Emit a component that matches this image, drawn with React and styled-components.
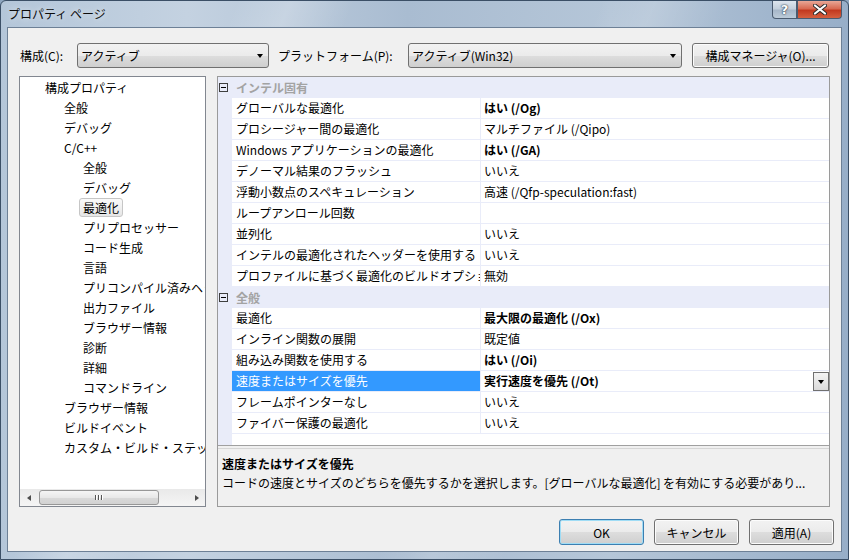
import React from 'react';
import styled, { createGlobalStyle } from 'styled-components';

const GlobalStyle = createGlobalStyle`
  html, body { margin: 0; padding: 0; }
  body {
    font-family: "Noto Sans CJK JP", "Noto Sans", sans-serif;
    font-size: 12px;
    color: #000;
    background: #8ea6c0;
  }
  * { box-sizing: border-box; }
`;

const Window = styled.div`
  width: 849px;
  height: 560px;
  display: flex;
  flex-direction: column;
  border: 1px solid #3b4f66;
  border-radius: 6px 6px 0 0;
  overflow: hidden;
  background:
    linear-gradient(112deg, transparent 0 22%, rgba(255,255,255,0.22) 27%, transparent 33%, transparent 56%, rgba(255,255,255,0.16) 61%, transparent 68%),
    linear-gradient(to right, #b4c6d9, #c4d2e1 22%, #a9bcd1 48%, #b5c6d8 72%, #97aec8);
`;

const TitleBar = styled.div`
  height: 26px;
  flex: none;
  display: flex;
  justify-content: space-between;
  align-items: flex-start;
  padding: 0 6px 0 7px;
`;

const Title = styled.div`
  margin-top: 4px;
  line-height: 17px;
  font-size: 12px;
  color: #0b0b0b;
  text-shadow: 0 0 6px rgba(255,255,255,0.8);
`;

const CaptionButtons = styled.div`
  display: flex;
`;

const CaptionButton = styled.div`
  width: ${p => p.$w}px;
  height: 18px;
  display: flex;
  align-items: center;
  justify-content: center;
  border: 1px solid #4a5b70;
  border-top: none;
  border-radius: ${p => p.$r};
  background: ${p => p.$close
    ? 'linear-gradient(#e9a796, #d86a52 45%, #c2391f 55%, #d5603f)'
    : 'linear-gradient(#dde5ee, #c4d0dd 45%, #a7b7c9 55%, #bccbd9)'};
  color: #fff;
  font-weight: 700;
  font-size: 13px;
  text-shadow: 0 0 2px #203040, 0 0 1px #203040;
  font-family: "DejaVu Sans", sans-serif;
`;

const Body = styled.div`
  flex: 1;
  margin: 0 6px 7px 6px;
  background: #f0f0f0;
  border: 1px solid #6d8096;
  display: flex;
  flex-direction: column;
`;

const Toolbar = styled.div`
  display: flex;
  align-items: center;
  padding: 15px 0 0 12px;
  height: 40px;
`;

const Label = styled.span`
  width: ${p => p.$w}px;
  line-height: 25px;
  white-space: nowrap;
`;

const Combo = styled.div`
  width: ${p => p.$w}px;
  height: 25px;
  margin-right: ${p => p.$mr || 0}px;
  display: flex;
  align-items: center;
  justify-content: space-between;
  padding: 0 5px 0 3px;
  border: 1px solid #707070;
  border-radius: 3px;
  background: linear-gradient(#f2f2f2, #ebebeb 50%, #dddddd 51%, #cfcfcf);
`;

const Arrow = styled.span`
  width: 0;
  height: 0;
  border-left: 3.5px solid transparent;
  border-right: 3.5px solid transparent;
  border-top: 4px solid #000;
`;

const PushButton = styled.div`
  width: ${p => p.$w}px;
  height: ${p => p.$h || 25}px;
  display: flex;
  align-items: center;
  justify-content: center;
  border: 1px solid ${p => p.$default ? '#3c7fb1' : '#707070'};
  border-radius: 3px;
  background: linear-gradient(#f2f2f2, #ebebeb 50%, #dddddd 51%, #cfcfcf);
  box-shadow: ${p => p.$default ? 'inset 0 0 0 1px #9fdcf5' : 'inset 0 0 0 1px #fcfcfc'};
  white-space: nowrap;
`;

const Main = styled.div`
  display: flex;
  gap: 11px;
  padding-left: 11px;
  margin-top: 8px;
  height: 431px;
`;

const TreePanel = styled.div`
  width: 187px;
  border: 1px solid #828790;
  background: #fff;
  display: flex;
  flex-direction: column;
`;

const TreeList = styled.div`
  flex: 1;
  overflow: hidden;
`;

const TreeItem = styled.div`
  height: 20px;
  display: flex;
  align-items: center;
  padding-left: ${p => 21 + p.$level * 19}px;
  white-space: nowrap;
`;

const TreeLabel = styled.span`
  line-height: 17px;
  padding: 0 3px;
  border: 1px solid ${p => p.$selected ? '#c6c6c6' : 'transparent'};
  border-radius: 3px;
  background: ${p => p.$selected ? 'linear-gradient(#fafafa, #e6e6e6)' : 'transparent'};
`;

const HScroll = styled.div`
  height: 17px;
  display: flex;
  align-items: center;
  background: linear-gradient(#e9e9e9, #f5f5f5);
`;

const ScrollArrow = styled.div`
  width: 17px;
  height: 17px;
  display: flex;
  align-items: center;
  justify-content: center;
  &::before {
    content: '';
    border-top: 3.5px solid transparent;
    border-bottom: 3.5px solid transparent;
    ${p => p.$dir === 'left' ? 'border-right: 4px solid #4d4d4d;' : 'border-left: 4px solid #4d4d4d;'}
  }
`;

const Thumb = styled.div`
  width: 120px;
  height: 15px;
  margin-left: 2px;
  margin-right: auto;
  border: 1px solid #979797;
  border-radius: 3px;
  background: linear-gradient(#f5f5f5, #e8e8e8 50%, #d9d9d9 51%, #d2d2d2);
  display: flex;
  align-items: center;
  justify-content: center;
  gap: 1px;
`;

const Grip = styled.span`
  width: 1px;
  height: 5px;
  background: #555;
  box-shadow: 1px 0 0 #fff;
  margin-right: 1px;
`;

const GridPanel = styled.div`
  width: 613px;
  border: 1px solid #9a9a9a;
  display: flex;
  flex-direction: column;
`;

const GridList = styled.div`
  flex: 1;
  overflow: hidden;
  background: linear-gradient(to right, #e9ecf9 14px, #fff 14px);
`;

const CategoryRow = styled.div`
  height: 21px;
  display: grid;
  grid-template-columns: 14px 1fr;
  align-items: center;
  background: #e9ecf9;
`;

const Collapse = styled.span`
  width: 9px;
  height: 9px;
  margin-left: 1px;
  border: 1px solid #3f3f3f;
  display: flex;
  align-items: center;
  justify-content: center;
  &::before {
    content: '';
    width: 5px;
    height: 1px;
    background: #000;
  }
`;

const CategoryText = styled.span`
  padding-left: 4px;
  color: #a3a3a3;
  font-weight: 700;
`;

const Row = styled.div`
  height: 21px;
  display: grid;
  grid-template-columns: 14px 249px 1fr;
`;

const NameCell = styled.div`
  border-bottom: 1px solid #e9ecf9;
  border-right: 1px solid #e9ecf9;
  padding-left: 4px;
  line-height: 20px;
  white-space: nowrap;
  overflow: hidden;
  background: ${p => p.$selected ? '#3399ff' : '#fff'};
  color: ${p => p.$selected ? '#fff' : '#000'};
`;

const ValueCell = styled.div`
  border-bottom: 1px solid #e9ecf9;
  padding-left: 3px;
  line-height: 20px;
  white-space: nowrap;
  overflow: hidden;
  display: flex;
  justify-content: space-between;
  font-weight: ${p => p.$bold ? 700 : 400};
  background: #fff;
`;

const DropButton = styled.span`
  width: 16px;
  height: 19px;
  margin-top: 1px;
  border: 1px solid #707070;
  background: linear-gradient(#f4f4f4, #dadada);
  display: flex;
  align-items: center;
  justify-content: center;
`;

const Splitter = styled.div`
  height: 4px;
  border-top: 1px solid #a0a0a0;
  border-bottom: 1px solid #d6d6d6;
  background: #f0f0f0;
`;

const Description = styled.div`
  height: 57px;
  padding: 5px 4px 0 4px;
  line-height: 19px;
  background: #f0f0f0;
  white-space: nowrap;
  overflow: hidden;
`;

const DescTitle = styled.div`
  font-weight: 700;
`;

const ButtonRow = styled.div`
  display: flex;
  justify-content: flex-end;
  gap: 10px;
  padding-right: 7px;
  margin-top: 12px;
`;

const treeItems = [
  ['構成プロパティ', 0],
  ['全般', 1],
  ['デバッグ', 1],
  ['C/C++', 1],
  ['全般', 2],
  ['デバッグ', 2],
  ['最適化', 2, true],
  ['プリプロセッサー', 2],
  ['コード生成', 2],
  ['言語', 2],
  ['プリコンパイル済みヘッダー', 2],
  ['出力ファイル', 2],
  ['ブラウザー情報', 2],
  ['診断', 2],
  ['詳細', 2],
  ['コマンドライン', 2],
  ['ブラウザー情報', 1],
  ['ビルドイベント', 1],
  ['カスタム・ビルド・ステップ', 1],
];

const sections = [
  {
    name: 'インテル固有',
    rows: [
      ['グローバルな最適化', 'はい (/Og)', true],
      ['プロシージャー間の最適化', 'マルチファイル (/Qipo)'],
      ['Windows アプリケーションの最適化', 'はい (/GA)', true],
      ['デノーマル結果のフラッシュ', 'いいえ'],
      ['浮動小数点のスペキュレーション', '高速 (/Qfp-speculation:fast)'],
      ['ループアンロール回数', ''],
      ['並列化', 'いいえ'],
      ['インテルの最適化されたヘッダーを使用する', 'いいえ'],
      ['プロファイルに基づく最適化のビルドオプション', '無効'],
    ],
  },
  {
    name: '全般',
    rows: [
      ['最適化', '最大限の最適化 (/Ox)', true],
      ['インライン関数の展開', '既定値'],
      ['組み込み関数を使用する', 'はい (/Oi)', true],
      ['速度またはサイズを優先', '実行速度を優先 (/Ot)', true, true],
      ['フレームポインターなし', 'いいえ'],
      ['ファイバー保護の最適化', 'いいえ'],
    ],
  },
];

const CloseGlyph = () => (
  <svg width="14" height="11" viewBox="0 0 14 11">
    <path d="M2 1.5 L12 9.5 M12 1.5 L2 9.5" stroke="#2b2b2b" strokeWidth="4" strokeLinecap="round" />
    <path d="M2 1.5 L12 9.5 M12 1.5 L2 9.5" stroke="#fff" strokeWidth="2.2" strokeLinecap="round" />
  </svg>
);

const App = () => {
  return (
    <>
      <GlobalStyle />
      <Window>
        <TitleBar>
          <Title>プロパティ ページ</Title>
          <CaptionButtons>
            <CaptionButton $w={25} $r="0 0 0 4px">?</CaptionButton>
            <CaptionButton $w={45} $r="0 0 4px 0" $close><CloseGlyph /></CaptionButton>
          </CaptionButtons>
        </TitleBar>
        <Body>
          <Toolbar>
            <Label $w={57}>構成(C):</Label>
            <Combo $w={192} $mr={9}>
              <span>アクティブ</span>
              <Arrow />
            </Combo>
            <Label $w={130}>プラットフォーム(P):</Label>
            <Combo $w={274} $mr={10}>
              <span>アクティブ(Win32)</span>
              <Arrow />
            </Combo>
            <PushButton $w={137}>構成マネージャ(O)...</PushButton>
          </Toolbar>
          <Main>
            <TreePanel>
              <TreeList>
                {treeItems.map(([text, level, selected], i) => (
                  <TreeItem key={i} $level={level}>
                    <TreeLabel $selected={selected}>{text}</TreeLabel>
                  </TreeItem>
                ))}
              </TreeList>
              <HScroll>
                <ScrollArrow $dir="left" />
                <Thumb>
                  <Grip /><Grip /><Grip />
                </Thumb>
                <ScrollArrow $dir="right" />
              </HScroll>
            </TreePanel>
            <GridPanel>
              <GridList>
                {sections.map(section => (
                  <React.Fragment key={section.name}>
                    <CategoryRow>
                      <Collapse />
                      <CategoryText>{section.name}</CategoryText>
                    </CategoryRow>
                    {section.rows.map(([name, value, bold, selected]) => (
                      <Row key={name}>
                        <span />
                        <NameCell $selected={selected}>{name}</NameCell>
                        <ValueCell $bold={bold}>
                          <span>{value}</span>
                          {selected && (
                            <DropButton><Arrow /></DropButton>
                          )}
                        </ValueCell>
                      </Row>
                    ))}
                  </React.Fragment>
                ))}
              </GridList>
              <Splitter />
              <Description>
                <DescTitle>速度またはサイズを優先</DescTitle>
                <div>コードの速度とサイズのどちらを優先するかを選択します。[グローバルな最適化] を有効にする必要があり...</div>
              </Description>
            </GridPanel>
          </Main>
          <ButtonRow>
            <PushButton $w={85} $h={26} $default>OK</PushButton>
            <PushButton $w={85} $h={26}>キャンセル</PushButton>
            <PushButton $w={85} $h={26}>適用(A)</PushButton>
          </ButtonRow>
        </Body>
      </Window>
    </>
  );
};

export default App;
